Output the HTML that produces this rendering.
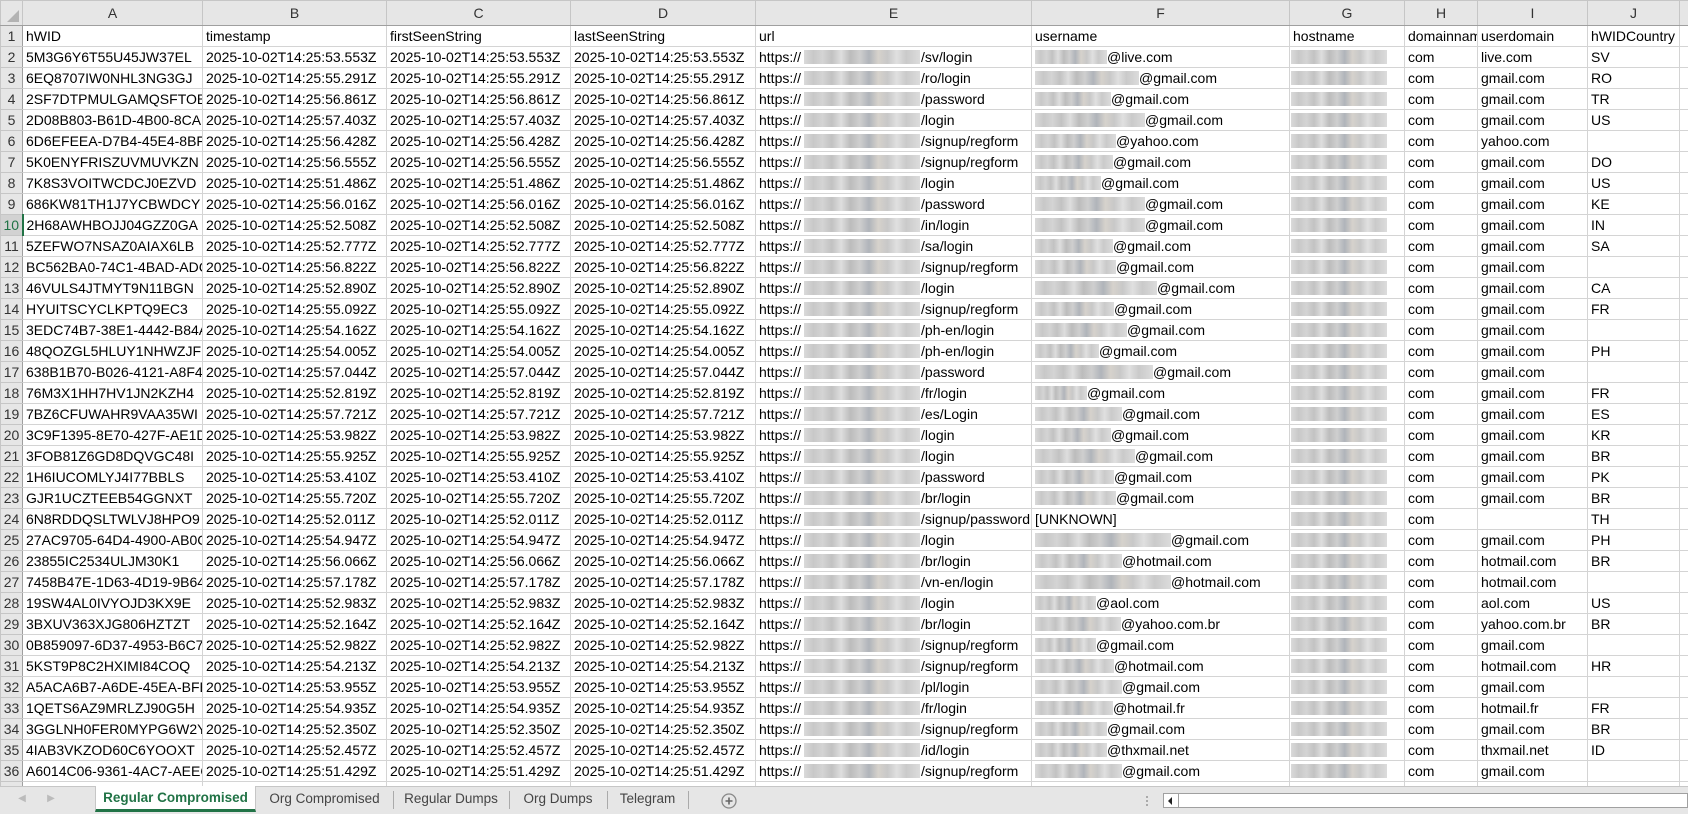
<!DOCTYPE html>
<html><head><meta charset="utf-8">
<style>
*{margin:0;padding:0;box-sizing:border-box}
html,body{width:1688px;height:814px;overflow:hidden;background:#fff;font-family:"Liberation Sans",sans-serif;}
table{border-collapse:collapse;table-layout:fixed;position:absolute;left:0;top:0;width:1688px}
td,th{height:21px;border:1px solid #d4d4d4;white-space:nowrap;overflow:hidden;font-size:14px;line-height:19px;color:#000;font-weight:normal;text-align:left;padding:0 0 0 3px}
thead th{height:25px;background:#e6e6e6;color:#333;text-align:center;border-color:#c6c6c6;border-bottom:1px solid #9f9f9f;font-size:14px;padding:0}
tbody th{background:#e6e6e6;color:#333;text-align:center;padding:0;border-color:#c6c6c6;border-right:1px solid #9f9f9f}
tbody th.g{color:#217346;border-right:2px solid #217346;background:#d2d2d2}
td.k{border-right:none}
i{display:inline-block;height:14px;vertical-align:-2px;background:linear-gradient(90deg,#dadada 0,#c8c8c8 8%,#d4d4d4 16%,#c2c2c2 24%,#dedede 32%,#bcbcbc 40%,#cfcfcf 48%,#b0b4ba 56%,#d6d2cc 64%,#c8c8c8 72%,#e0e0e0 80%,#cacaca 88%,#dcdcdc 100%)}
i.u{width:116px;margin-left:3px;margin-right:1px}
i.h{width:96px;margin-left:-2px}
#tabs{position:absolute;left:0;top:786px;width:1688px;height:28px;background:#e6e6e6;border-top:1px solid #c6c6c6}
.t{position:absolute;top:0;height:26px;line-height:24px;font-size:13.5px;color:#444;text-align:center}
.sep{position:absolute;top:4px;width:1px;height:18px;background:#aaa}
</style></head><body>
<table>
<colgroup><col style="width:22px"><col style="width:180px"><col style="width:184px"><col style="width:184px"><col style="width:185px"><col style="width:276px"><col style="width:258px"><col style="width:115px"><col style="width:73px"><col style="width:110px"><col style="width:92px"><col style="width:9px"></colgroup>
<thead><tr><th style="position:relative"><span style="position:absolute;right:3px;bottom:3px;width:0;height:0;border-left:12px solid transparent;border-bottom:12px solid #b3b3b3"></span></th><th>A</th><th>B</th><th>C</th><th>D</th><th>E</th><th>F</th><th>G</th><th>H</th><th>I</th><th>J</th><th></th></tr></thead>
<tbody>
<tr><th>1</th><td>hWID</td><td>timestamp</td><td>firstSeenString</td><td>lastSeenString</td><td>url</td><td>username</td><td>hostname</td><td>domainname</td><td>userdomain</td><td>hWIDCountry</td><td class="k"></td></tr>
<tr><th>2</th><td>5M3G6Y6T55U45JW37EL</td><td>2025-10-02T14:25:53.553Z</td><td>2025-10-02T14:25:53.553Z</td><td>2025-10-02T14:25:53.553Z</td><td>https://<i class="u"></i>/sv/login</td><td><i style="width:72px"></i>@live.com</td><td><i class="h"></i></td><td>com</td><td>live.com</td><td>SV</td><td class="k"></td></tr>
<tr><th>3</th><td>6EQ8707IW0NHL3NG3GJ</td><td>2025-10-02T14:25:55.291Z</td><td>2025-10-02T14:25:55.291Z</td><td>2025-10-02T14:25:55.291Z</td><td>https://<i class="u"></i>/ro/login</td><td><i style="width:104px"></i>@gmail.com</td><td><i class="h"></i></td><td>com</td><td>gmail.com</td><td>RO</td><td class="k"></td></tr>
<tr><th>4</th><td>2SF7DTPMULGAMQSFTOB</td><td>2025-10-02T14:25:56.861Z</td><td>2025-10-02T14:25:56.861Z</td><td>2025-10-02T14:25:56.861Z</td><td>https://<i class="u"></i>/password</td><td><i style="width:76px"></i>@gmail.com</td><td><i class="h"></i></td><td>com</td><td>gmail.com</td><td>TR</td><td class="k"></td></tr>
<tr><th>5</th><td>2D08B803-B61D-4B00-8CA</td><td>2025-10-02T14:25:57.403Z</td><td>2025-10-02T14:25:57.403Z</td><td>2025-10-02T14:25:57.403Z</td><td>https://<i class="u"></i>/login</td><td><i style="width:110px"></i>@gmail.com</td><td><i class="h"></i></td><td>com</td><td>gmail.com</td><td>US</td><td class="k"></td></tr>
<tr><th>6</th><td>6D6EFEEA-D7B4-45E4-8BF1</td><td>2025-10-02T14:25:56.428Z</td><td>2025-10-02T14:25:56.428Z</td><td>2025-10-02T14:25:56.428Z</td><td>https://<i class="u"></i>/signup/regform</td><td><i style="width:81px"></i>@yahoo.com</td><td><i class="h"></i></td><td>com</td><td>yahoo.com</td><td></td><td class="k"></td></tr>
<tr><th>7</th><td>5K0ENYFRISZUVMUVKZN</td><td>2025-10-02T14:25:56.555Z</td><td>2025-10-02T14:25:56.555Z</td><td>2025-10-02T14:25:56.555Z</td><td>https://<i class="u"></i>/signup/regform</td><td><i style="width:78px"></i>@gmail.com</td><td><i class="h"></i></td><td>com</td><td>gmail.com</td><td>DO</td><td class="k"></td></tr>
<tr><th>8</th><td>7K8S3VOITWCDCJ0EZVD</td><td>2025-10-02T14:25:51.486Z</td><td>2025-10-02T14:25:51.486Z</td><td>2025-10-02T14:25:51.486Z</td><td>https://<i class="u"></i>/login</td><td><i style="width:66px"></i>@gmail.com</td><td><i class="h"></i></td><td>com</td><td>gmail.com</td><td>US</td><td class="k"></td></tr>
<tr><th>9</th><td>686KW81TH1J7YCBWDCY</td><td>2025-10-02T14:25:56.016Z</td><td>2025-10-02T14:25:56.016Z</td><td>2025-10-02T14:25:56.016Z</td><td>https://<i class="u"></i>/password</td><td><i style="width:110px"></i>@gmail.com</td><td><i class="h"></i></td><td>com</td><td>gmail.com</td><td>KE</td><td class="k"></td></tr>
<tr><th class="g">10</th><td>2H68AWHBOJJ04GZZ0GA</td><td>2025-10-02T14:25:52.508Z</td><td>2025-10-02T14:25:52.508Z</td><td>2025-10-02T14:25:52.508Z</td><td>https://<i class="u"></i>/in/login</td><td><i style="width:110px"></i>@gmail.com</td><td><i class="h"></i></td><td>com</td><td>gmail.com</td><td>IN</td><td class="k"></td></tr>
<tr><th>11</th><td>5ZEFWO7NSAZ0AIAX6LB</td><td>2025-10-02T14:25:52.777Z</td><td>2025-10-02T14:25:52.777Z</td><td>2025-10-02T14:25:52.777Z</td><td>https://<i class="u"></i>/sa/login</td><td><i style="width:78px"></i>@gmail.com</td><td><i class="h"></i></td><td>com</td><td>gmail.com</td><td>SA</td><td class="k"></td></tr>
<tr><th>12</th><td>BC562BA0-74C1-4BAD-ADC</td><td>2025-10-02T14:25:56.822Z</td><td>2025-10-02T14:25:56.822Z</td><td>2025-10-02T14:25:56.822Z</td><td>https://<i class="u"></i>/signup/regform</td><td><i style="width:81px"></i>@gmail.com</td><td><i class="h"></i></td><td>com</td><td>gmail.com</td><td></td><td class="k"></td></tr>
<tr><th>13</th><td>46VULS4JTMYT9N11BGN</td><td>2025-10-02T14:25:52.890Z</td><td>2025-10-02T14:25:52.890Z</td><td>2025-10-02T14:25:52.890Z</td><td>https://<i class="u"></i>/login</td><td><i style="width:122px"></i>@gmail.com</td><td><i class="h"></i></td><td>com</td><td>gmail.com</td><td>CA</td><td class="k"></td></tr>
<tr><th>14</th><td>HYUITSCYCLKPTQ9EC3</td><td>2025-10-02T14:25:55.092Z</td><td>2025-10-02T14:25:55.092Z</td><td>2025-10-02T14:25:55.092Z</td><td>https://<i class="u"></i>/signup/regform</td><td><i style="width:79px"></i>@gmail.com</td><td><i class="h"></i></td><td>com</td><td>gmail.com</td><td>FR</td><td class="k"></td></tr>
<tr><th>15</th><td>3EDC74B7-38E1-4442-B84A</td><td>2025-10-02T14:25:54.162Z</td><td>2025-10-02T14:25:54.162Z</td><td>2025-10-02T14:25:54.162Z</td><td>https://<i class="u"></i>/ph-en/login</td><td><i style="width:92px"></i>@gmail.com</td><td><i class="h"></i></td><td>com</td><td>gmail.com</td><td></td><td class="k"></td></tr>
<tr><th>16</th><td>48QOZGL5HLUY1NHWZJF</td><td>2025-10-02T14:25:54.005Z</td><td>2025-10-02T14:25:54.005Z</td><td>2025-10-02T14:25:54.005Z</td><td>https://<i class="u"></i>/ph-en/login</td><td><i style="width:64px"></i>@gmail.com</td><td><i class="h"></i></td><td>com</td><td>gmail.com</td><td>PH</td><td class="k"></td></tr>
<tr><th>17</th><td>638B1B70-B026-4121-A8F4</td><td>2025-10-02T14:25:57.044Z</td><td>2025-10-02T14:25:57.044Z</td><td>2025-10-02T14:25:57.044Z</td><td>https://<i class="u"></i>/password</td><td><i style="width:118px"></i>@gmail.com</td><td><i class="h"></i></td><td>com</td><td>gmail.com</td><td></td><td class="k"></td></tr>
<tr><th>18</th><td>76M3X1HH7HV1JN2KZH4</td><td>2025-10-02T14:25:52.819Z</td><td>2025-10-02T14:25:52.819Z</td><td>2025-10-02T14:25:52.819Z</td><td>https://<i class="u"></i>/fr/login</td><td><i style="width:52px"></i>@gmail.com</td><td><i class="h"></i></td><td>com</td><td>gmail.com</td><td>FR</td><td class="k"></td></tr>
<tr><th>19</th><td>7BZ6CFUWAHR9VAA35WI</td><td>2025-10-02T14:25:57.721Z</td><td>2025-10-02T14:25:57.721Z</td><td>2025-10-02T14:25:57.721Z</td><td>https://<i class="u"></i>/es/Login</td><td><i style="width:87px"></i>@gmail.com</td><td><i class="h"></i></td><td>com</td><td>gmail.com</td><td>ES</td><td class="k"></td></tr>
<tr><th>20</th><td>3C9F1395-8E70-427F-AE1D</td><td>2025-10-02T14:25:53.982Z</td><td>2025-10-02T14:25:53.982Z</td><td>2025-10-02T14:25:53.982Z</td><td>https://<i class="u"></i>/login</td><td><i style="width:76px"></i>@gmail.com</td><td><i class="h"></i></td><td>com</td><td>gmail.com</td><td>KR</td><td class="k"></td></tr>
<tr><th>21</th><td>3FOB81Z6GD8DQVGC48I</td><td>2025-10-02T14:25:55.925Z</td><td>2025-10-02T14:25:55.925Z</td><td>2025-10-02T14:25:55.925Z</td><td>https://<i class="u"></i>/login</td><td><i style="width:100px"></i>@gmail.com</td><td><i class="h"></i></td><td>com</td><td>gmail.com</td><td>BR</td><td class="k"></td></tr>
<tr><th>22</th><td>1H6IUCOMLYJ4I77BBLS</td><td>2025-10-02T14:25:53.410Z</td><td>2025-10-02T14:25:53.410Z</td><td>2025-10-02T14:25:53.410Z</td><td>https://<i class="u"></i>/password</td><td><i style="width:79px"></i>@gmail.com</td><td><i class="h"></i></td><td>com</td><td>gmail.com</td><td>PK</td><td class="k"></td></tr>
<tr><th>23</th><td>GJR1UCZTEEB54GGNXT</td><td>2025-10-02T14:25:55.720Z</td><td>2025-10-02T14:25:55.720Z</td><td>2025-10-02T14:25:55.720Z</td><td>https://<i class="u"></i>/br/login</td><td><i style="width:81px"></i>@gmail.com</td><td><i class="h"></i></td><td>com</td><td>gmail.com</td><td>BR</td><td class="k"></td></tr>
<tr><th>24</th><td>6N8RDDQSLTWLVJ8HPO9</td><td>2025-10-02T14:25:52.011Z</td><td>2025-10-02T14:25:52.011Z</td><td>2025-10-02T14:25:52.011Z</td><td>https://<i class="u"></i>/signup/password</td><td>[UNKNOWN]</td><td><i class="h"></i></td><td>com</td><td></td><td>TH</td><td class="k"></td></tr>
<tr><th>25</th><td>27AC9705-64D4-4900-AB0C</td><td>2025-10-02T14:25:54.947Z</td><td>2025-10-02T14:25:54.947Z</td><td>2025-10-02T14:25:54.947Z</td><td>https://<i class="u"></i>/login</td><td><i style="width:136px"></i>@gmail.com</td><td><i class="h"></i></td><td>com</td><td>gmail.com</td><td>PH</td><td class="k"></td></tr>
<tr><th>26</th><td>23855IC2534ULJM30K1</td><td>2025-10-02T14:25:56.066Z</td><td>2025-10-02T14:25:56.066Z</td><td>2025-10-02T14:25:56.066Z</td><td>https://<i class="u"></i>/br/login</td><td><i style="width:87px"></i>@hotmail.com</td><td><i class="h"></i></td><td>com</td><td>hotmail.com</td><td>BR</td><td class="k"></td></tr>
<tr><th>27</th><td>7458B47E-1D63-4D19-9B64</td><td>2025-10-02T14:25:57.178Z</td><td>2025-10-02T14:25:57.178Z</td><td>2025-10-02T14:25:57.178Z</td><td>https://<i class="u"></i>/vn-en/login</td><td><i style="width:136px"></i>@hotmail.com</td><td><i class="h"></i></td><td>com</td><td>hotmail.com</td><td></td><td class="k"></td></tr>
<tr><th>28</th><td>19SW4AL0IVYOJD3KX9E</td><td>2025-10-02T14:25:52.983Z</td><td>2025-10-02T14:25:52.983Z</td><td>2025-10-02T14:25:52.983Z</td><td>https://<i class="u"></i>/login</td><td><i style="width:61px"></i>@aol.com</td><td><i class="h"></i></td><td>com</td><td>aol.com</td><td>US</td><td class="k"></td></tr>
<tr><th>29</th><td>3BXUV363XJG806HZTZT</td><td>2025-10-02T14:25:52.164Z</td><td>2025-10-02T14:25:52.164Z</td><td>2025-10-02T14:25:52.164Z</td><td>https://<i class="u"></i>/br/login</td><td><i style="width:86px"></i>@yahoo.com.br</td><td><i class="h"></i></td><td>com</td><td>yahoo.com.br</td><td>BR</td><td class="k"></td></tr>
<tr><th>30</th><td>0B859097-6D37-4953-B6C7</td><td>2025-10-02T14:25:52.982Z</td><td>2025-10-02T14:25:52.982Z</td><td>2025-10-02T14:25:52.982Z</td><td>https://<i class="u"></i>/signup/regform</td><td><i style="width:61px"></i>@gmail.com</td><td><i class="h"></i></td><td>com</td><td>gmail.com</td><td></td><td class="k"></td></tr>
<tr><th>31</th><td>5KST9P8C2HXIMI84COQ</td><td>2025-10-02T14:25:54.213Z</td><td>2025-10-02T14:25:54.213Z</td><td>2025-10-02T14:25:54.213Z</td><td>https://<i class="u"></i>/signup/regform</td><td><i style="width:79px"></i>@hotmail.com</td><td><i class="h"></i></td><td>com</td><td>hotmail.com</td><td>HR</td><td class="k"></td></tr>
<tr><th>32</th><td>A5ACA6B7-A6DE-45EA-BFE</td><td>2025-10-02T14:25:53.955Z</td><td>2025-10-02T14:25:53.955Z</td><td>2025-10-02T14:25:53.955Z</td><td>https://<i class="u"></i>/pl/login</td><td><i style="width:87px"></i>@gmail.com</td><td><i class="h"></i></td><td>com</td><td>gmail.com</td><td></td><td class="k"></td></tr>
<tr><th>33</th><td>1QETS6AZ9MRLZJ90G5H</td><td>2025-10-02T14:25:54.935Z</td><td>2025-10-02T14:25:54.935Z</td><td>2025-10-02T14:25:54.935Z</td><td>https://<i class="u"></i>/fr/login</td><td><i style="width:78px"></i>@hotmail.fr</td><td><i class="h"></i></td><td>com</td><td>hotmail.fr</td><td>FR</td><td class="k"></td></tr>
<tr><th>34</th><td>3GGLNH0FER0MYPG6W2Y</td><td>2025-10-02T14:25:52.350Z</td><td>2025-10-02T14:25:52.350Z</td><td>2025-10-02T14:25:52.350Z</td><td>https://<i class="u"></i>/signup/regform</td><td><i style="width:72px"></i>@gmail.com</td><td><i class="h"></i></td><td>com</td><td>gmail.com</td><td>BR</td><td class="k"></td></tr>
<tr><th>35</th><td>4IAB3VKZOD60C6YOOXT</td><td>2025-10-02T14:25:52.457Z</td><td>2025-10-02T14:25:52.457Z</td><td>2025-10-02T14:25:52.457Z</td><td>https://<i class="u"></i>/id/login</td><td><i style="width:72px"></i>@thxmail.net</td><td><i class="h"></i></td><td>com</td><td>thxmail.net</td><td>ID</td><td class="k"></td></tr>
<tr><th>36</th><td>A6014C06-9361-4AC7-AEEC</td><td>2025-10-02T14:25:51.429Z</td><td>2025-10-02T14:25:51.429Z</td><td>2025-10-02T14:25:51.429Z</td><td>https://<i class="u"></i>/signup/regform</td><td><i style="width:87px"></i>@gmail.com</td><td><i class="h"></i></td><td>com</td><td>gmail.com</td><td></td><td class="k"></td></tr>
<tr><th></th><td></td><td></td><td></td><td></td><td></td><td></td><td></td><td></td><td></td><td></td><td class="k"></td></tr>
</tbody></table>
<div id="tabs">
<div class="t" style="left:16px;width:12px;color:#bbb;font-size:10px">&#9664;</div>
<div class="t" style="left:45px;width:12px;color:#bbb;font-size:10px">&#9654;</div>
<div class="t" style="left:95px;width:161px;background:#fff;color:#217346;font-weight:bold;height:26px;border-bottom:3px solid #217346;border-right:1px solid #c6c6c6;border-left:1px solid #c6c6c6;top:-1px">Regular Compromised</div>
<div class="t" style="left:256px;width:137px">Org Compromised</div>
<div class="sep" style="left:393px"></div>
<div class="t" style="left:393px;width:116px">Regular Dumps</div>
<div class="sep" style="left:509px"></div>
<div class="t" style="left:509px;width:98px">Org Dumps</div>
<div class="sep" style="left:607px"></div>
<div class="t" style="left:607px;width:81px">Telegram</div>
<div class="sep" style="left:688px"></div>
<svg style="position:absolute;left:721px;top:6px" width="16" height="16" viewBox="0 0 16 16"><circle cx="8" cy="8" r="7" fill="none" stroke="#888" stroke-width="1.3"/><path d="M8 4.5v7M4.5 8h7" stroke="#666" stroke-width="1.6"/></svg>
<div style="position:absolute;left:1146px;top:9px;width:2px;height:2px;background:#aaa;box-shadow:0 4px #aaa,0 8px #aaa"></div>
<div style="position:absolute;left:1163px;top:6px;width:525px;height:15px;background:#fff;border:1px solid #a0a0a0"></div>
<div style="position:absolute;left:1163px;top:6px;width:16px;height:15px;border:1px solid #a0a0a0;background:#fff"></div>
<div style="position:absolute;left:1168px;top:10px;width:0;height:0;border-top:4px solid transparent;border-bottom:4px solid transparent;border-right:4px solid #222"></div>
</div>
</body></html>
